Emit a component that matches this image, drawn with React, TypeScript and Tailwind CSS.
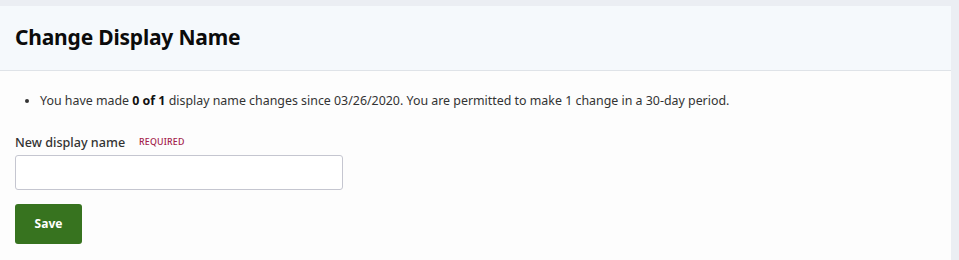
import React from 'react';

const App: React.FC = () => {
  return (
    <div
      className="min-h-[260px] bg-[#ebeef3] pt-[6px] pr-[8px]"
      style={{ fontFamily: '"Noto Sans", "Open Sans", sans-serif' }}
    >
      <div className="bg-[#fdfdfd] min-h-[254px]">
        {/* Header */}
        <div className="h-[65px] bg-[#f5f9fc] border-b border-[#dfe3e8] flex items-center px-[15px]">
          <h1 className="text-[21px] font-bold text-[#0b0b0b] tracking-[-0.2px]">Change Display Name</h1>
        </div>

        {/* Body */}
        <div className="px-[15px] pt-[21px]">
          <ul className="list-disc pl-[25px] text-[12.4px] text-[#333] marker:text-[#333]">
            <li>
              You have made <span className="font-bold text-[#111]">0 of 1</span> display name changes since
              03/26/2020. You are permitted to make 1 change in a 30-day period.
            </li>
          </ul>

          <div className="mt-[23px] flex items-center gap-[14px]">
            <label className="text-[12.6px] font-medium text-[#333]">New display name</label>
            <span className="text-[8.8px] font-medium text-[#a3214b] tracking-[0.2px]">REQUIRED</span>
          </div>

          <input
            type="text"
            className="mt-[2px] block w-[328px] h-[35px] bg-white border border-[#c5c6d0] rounded-[3px] outline-none px-2"
          />

          <button className="mt-[14px] w-[67px] h-[40px] bg-[#37731f] text-white text-[12px] font-bold rounded-[3px] pt-px">
            Save
          </button>
        </div>
      </div>
    </div>
  );
};

export default App;
